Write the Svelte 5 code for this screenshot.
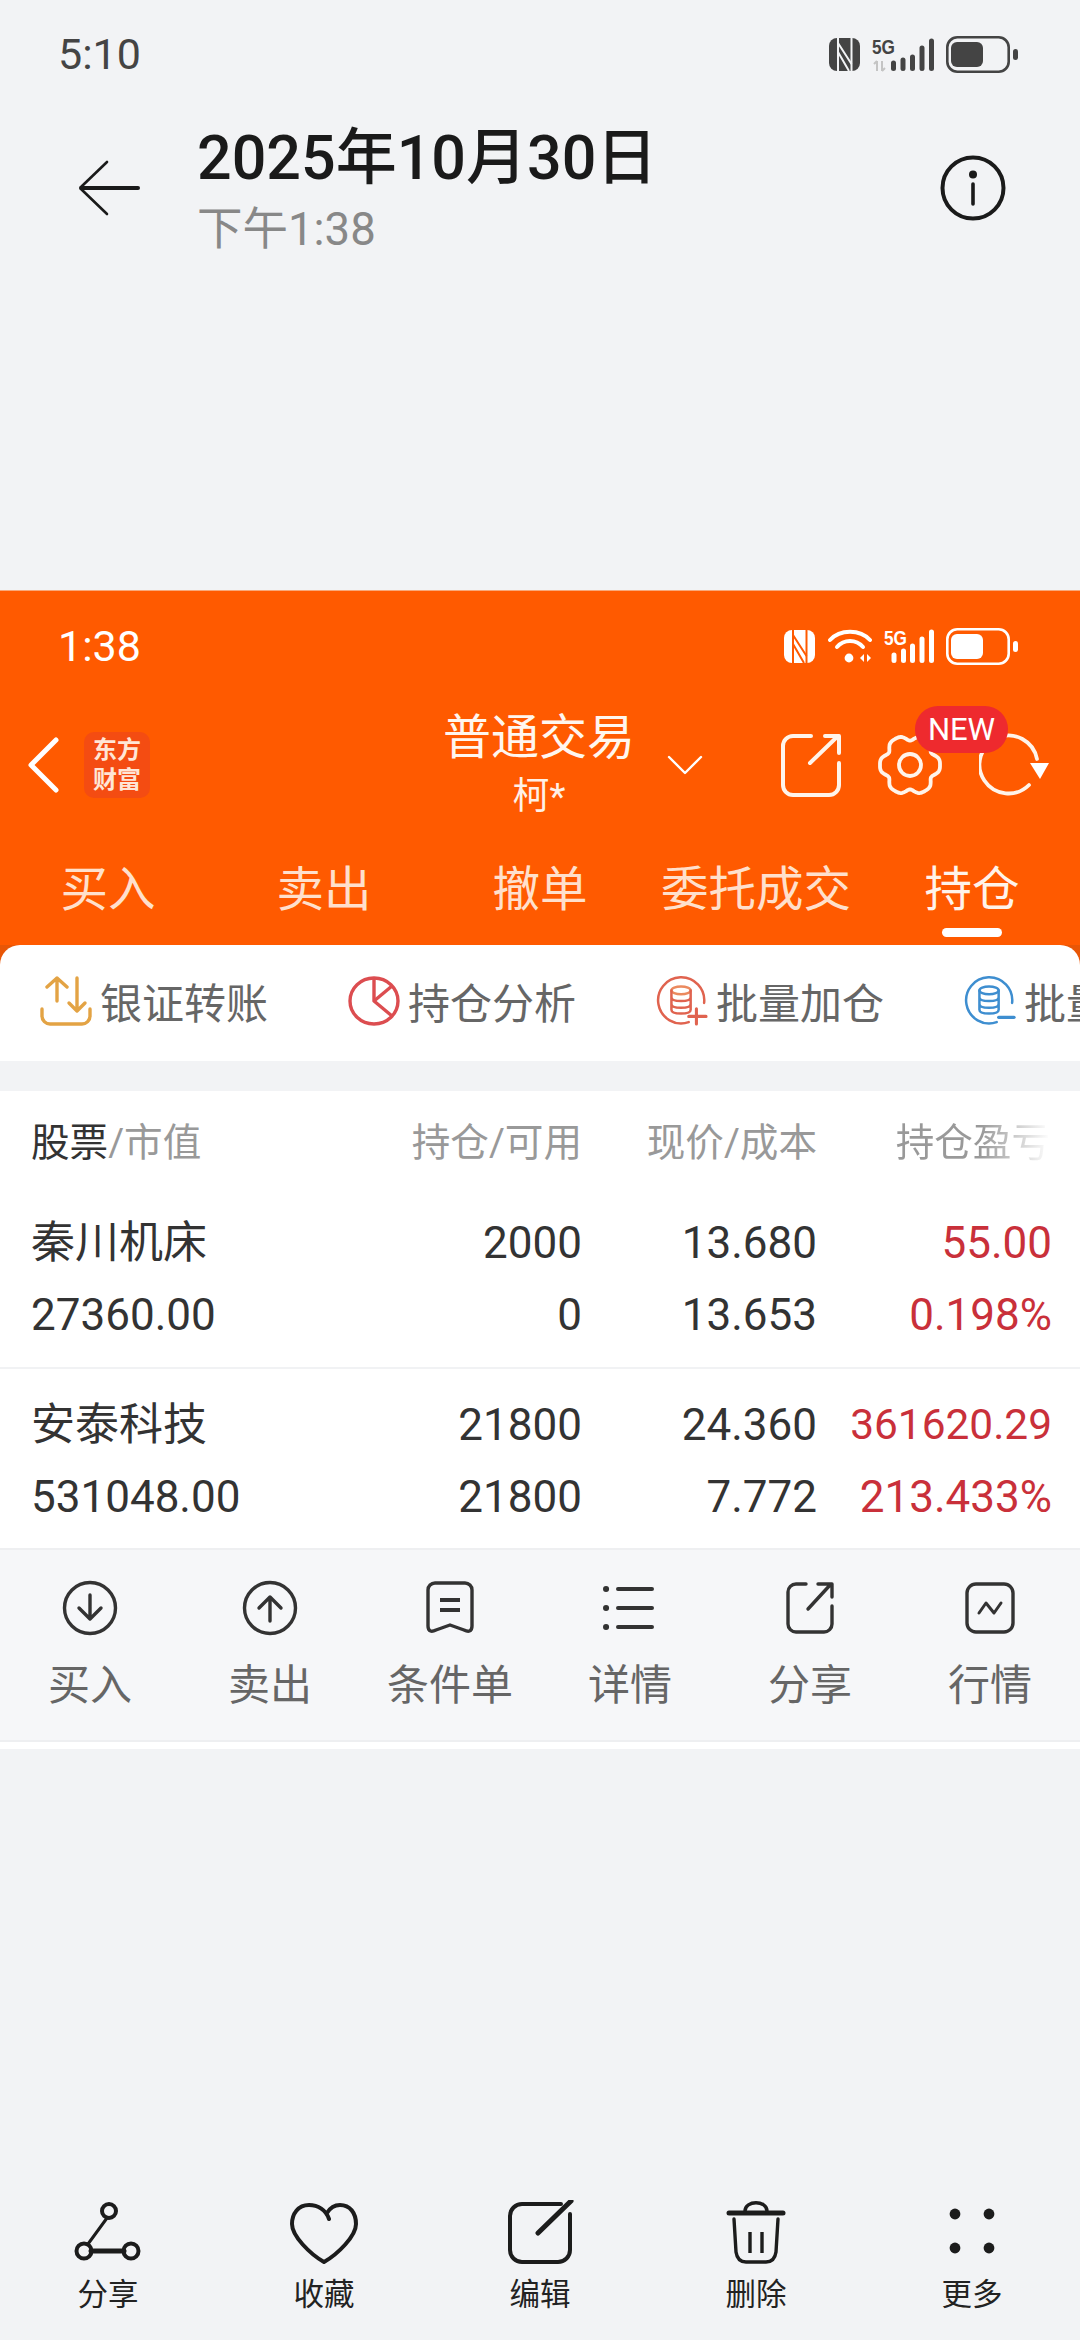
<script>
  const tabs = ['买入', '卖出', '撤单', '委托成交', '持仓'];
  const rows = [
    { name: '秦川机床', value: '27360.00', hold: '2000', avail: '0', price: '13.680', cost: '13.653', pl: '55.00', pct: '0.198%', long: false },
    { name: '安泰科技', value: '531048.00', hold: '21800', avail: '21800', price: '24.360', cost: '7.772', pl: '361620.29', pct: '213.433%', long: true }
  ];
  const actions = ['买入', '卖出', '条件单', '详情', '分享', '行情'];
  const bottom = ['分享', '收藏', '编辑', '删除', '更多'];

  function gearPath() {
    const pts = [];
    for (let i = 0; i < 120; i++) {
      const t = (i / 120) * Math.PI * 2;
      const c = Math.cos(6 * t);
      const r = 28 - 2.8 * c - 0.8 * Math.cos(12 * t);
      pts.push(`${(33 + r * Math.sin(t)).toFixed(1)} ${(32 - r * Math.cos(t)).toFixed(1)}`);
    }
    return 'M' + pts.join('L') + 'Z';
  }
  const gear = gearPath();
</script>

{#snippet nfc(bg)}
  <svg class="nfc" viewBox="0 0 31 33">
    <rect x="0" y="0" width="31" height="33" rx="8" fill="currentColor" />
    <g fill="none" stroke={bg} stroke-width="2">
      <path d="M9 0V33M22.5 0V33" />
      <path d="M9 5L22.5 26M9 14L20 33" />
    </g>
  </svg>
{/snippet}

{#snippet signalDark()}
  <svg class="signal" viewBox="0 0 62 33">
    <text x="0" y="16" class="fiveg" textLength="23" lengthAdjust="spacingAndGlyphs">5G</text>
    <g fill="none" stroke="#c4c4c4" stroke-width="2">
      <path d="M5 23v10M2 26l3-3M10 23v10M13 30l-3 3" />
    </g>
    <g fill="none" stroke="currentColor" stroke-width="5" stroke-linecap="round">
      <path d="M21.5 25v5.5M31 22v8.5M40.5 19v11.5M50 10v20.5M59.5 3v27.5" />
    </g>
  </svg>
{/snippet}

{#snippet signalLight()}
  <svg class="signal light-sig" viewBox="0 0 50 34">
    <text x="0" y="16" class="fiveg" textLength="23" lengthAdjust="spacingAndGlyphs">5G</text>
    <g fill="none" stroke="currentColor" stroke-width="5" stroke-linecap="round">
      <path d="M10 26v5.5M19.5 22v9.5M28.5 17v14.5M38 10v21.5M47.5 3v28.5" />
    </g>
  </svg>
{/snippet}

{#snippet battery()}
  <svg class="battery" viewBox="0 0 72 37">
    <rect x="1.3" y="1.3" width="61.4" height="34.4" rx="10" fill="none" stroke="currentColor" stroke-width="2.6" />
    <rect x="5" y="6" width="32" height="25" rx="6" fill="currentColor" />
    <rect x="67" y="13" width="5" height="11" rx="2.5" fill="currentColor" />
  </svg>
{/snippet}

<div class="page">
  <section class="gallery-head">
    <div class="status dark">
      <span class="time">5:10</span>
      <div class="status-icons">
        {@render nfc('#f2f3f5')}
        {@render signalDark()}
        {@render battery()}
      </div>
    </div>
    <div class="titlebar">
      <svg class="back" viewBox="0 0 62 56" fill="none" stroke="#1a1a1a" stroke-linecap="round">
        <path d="M29 2L3 27" stroke-width="2.6" />
        <path d="M3 29L29 54" stroke-width="2.6" />
        <path d="M3 28H60" stroke-width="4" />
      </svg>
      <div class="title-text">
        <div class="date">2025年10月30日</div>
        <div class="clock">下午1:38</div>
      </div>
      <svg class="info" viewBox="0 0 66 66" fill="none" stroke="#1a1a1a">
        <circle cx="33" cy="33" r="30.5" stroke-width="4" />
        <circle cx="33" cy="19.5" r="4" fill="#1a1a1a" stroke="none" />
        <path d="M33 29v20" stroke-width="3.6" stroke-linecap="round" />
      </svg>
    </div>
  </section>

  <section class="shot">
    <div class="orange">
      <div class="status light">
        <span class="time">1:38</span>
        <div class="status-icons">
          {@render nfc('#ff5a00')}
          <svg class="wifi" viewBox="0 0 44 34" fill="none" stroke="currentColor" stroke-linecap="round">
            <path d="M2 11C12 0 32 0 42 11" stroke-width="4" />
            <path d="M9 18C16 10 28 10 35 18" stroke-width="4" />
            <circle cx="21" cy="29" r="4.4" fill="currentColor" stroke="none" />
            <path d="M36 25l-4 4l4 4ZM39 25l4 4l-4 4Z" fill="currentColor" stroke="none" />
          </svg>
          {@render signalLight()}
          {@render battery()}
        </div>
      </div>

      <div class="apphead">
        <svg class="chev" viewBox="0 0 32 56" fill="none" stroke="#fff" stroke-width="5" stroke-linecap="round" stroke-linejoin="round">
          <path d="M29 3L4 28L29 53" />
        </svg>
        <div class="logo"><span>东方</span><span>财富</span></div>
        <div class="apptitle">
          <div class="t1">普通交易</div>
          <div class="t2">柯*</div>
        </div>
        <svg class="down" viewBox="0 0 36 20" fill="none" stroke="#fff" stroke-width="2.4" stroke-linecap="round" stroke-linejoin="round">
          <path d="M2 2L18 18L34 2" />
        </svg>
        <svg class="hshare" viewBox="0 0 60 64" fill="none" stroke="#fff4ea" stroke-width="4" stroke-linecap="round" stroke-linejoin="round">
          <path d="M30 3H12A10 10 0 0 0 2 13V52A10 10 0 0 0 12 62H48A10 10 0 0 0 58 52V30" />
          <path d="M29 30L57 3" />
          <path d="M44 3H58V20" />
        </svg>
        <div class="gearwrap">
          <svg class="gear" viewBox="0 0 66 64" fill="none" stroke="#fff4ea" stroke-width="3.8">
            <path d={gear} stroke-linejoin="round" />
            <circle cx="33" cy="32" r="11" />
          </svg>
          <span class="new">NEW</span>
        </div>
        <svg class="refresh" viewBox="0 0 70 64" fill="none" stroke="#fff4ea" stroke-width="3.8" stroke-linecap="round">
          <path d="M50 52A29 29 0 1 1 58 26" />
          <path d="M51 30H70L61 46Z" fill="#fff" stroke="none" />
        </svg>
      </div>

      <div class="tabs">
        {#each tabs as t, i}
          <div class="tab" class:active={i === 4}>{t}</div>
        {/each}
      </div>
    </div>

    <div class="cardback">
      <div class="shortcuts">
        <div class="sc">
          <svg viewBox="0 0 52 50" fill="none" stroke="#e3a344" stroke-width="3.4" stroke-linecap="round" stroke-linejoin="round">
            <path d="M2 33V40A8 8 0 0 0 10 48H42A8 8 0 0 0 50 40V33" />
            <path d="M17 25V2M7 11L17 2L27 11" />
            <path d="M37 2V35M29 27L37 35L45 27" />
          </svg>
          <span>银证转账</span>
        </div>
        <div class="sc">
          <svg viewBox="0 0 52 50" fill="none" stroke="#dc4d50" stroke-width="3.4" stroke-linejoin="round">
            <ellipse cx="26" cy="25" rx="24" ry="23" />
            <path d="M26 2V25L44 40" />
            <path d="M26 25L44 10" />
          </svg>
          <span>持仓分析</span>
        </div>
        <div class="sc">
          <svg viewBox="0 0 54 52" fill="none" stroke="#e0634f" stroke-width="2.6" stroke-linecap="round">
            <path d="M50 28A24 24 0 1 0 34 48" />
            <ellipse cx="26" cy="15" rx="10" ry="4" stroke="#eb8a5f" />
            <path d="M16 15V35C16 38 21 39 26 39S36 38 36 35V15M16 22C16 25 21 26 26 26S36 25 36 22M16 29C16 32 21 33 26 33S36 32 36 29" />
            <path d="M42 34V50M34 42H52" stroke-width="3.2" />
          </svg>
          <span>批量加仓</span>
        </div>
        <div class="sc">
          <svg viewBox="0 0 54 52" fill="none" stroke="#3e8ed0" stroke-width="2.6" stroke-linecap="round">
            <path d="M50 28A24 24 0 1 0 34 48" />
            <ellipse cx="26" cy="15" rx="10" ry="4" />
            <path d="M16 15V35C16 38 21 39 26 39S36 38 36 35V15M16 22C16 25 21 26 26 26S36 25 36 22M16 29C16 32 21 33 26 33S36 32 36 29" />
            <path d="M36 43H52" stroke-width="3.4" />
          </svg>
          <span>批量减仓</span>
        </div>
      </div>
    </div>

    <div class="table">
      <div class="row head">
        <div class="c c1"><span class="strong">股票</span>/市值</div>
        <div class="c c2">持仓/可用</div>
        <div class="c c3">现价/成本</div>
        <div class="c c4 h4"><span class="fade">持仓盈亏</span></div>
      </div>
      {#each rows as r}
        <div class="row data">
          <div class="c c1"><div>{r.name}</div><div>{r.value}</div></div>
          <div class="c c2"><div>{r.hold}</div><div>{r.avail}</div></div>
          <div class="c c3"><div>{r.price}</div><div>{r.cost}</div></div>
          <div class="c c4 red"><div class:long={r.long}>{r.pl}</div><div>{r.pct}</div></div>
        </div>
      {/each}
    </div>

    <div class="actions">
      {#each actions as a, i}
        <div class="act">
          <svg viewBox="0 0 56 56" fill="none" stroke="#333" stroke-width="3.4" stroke-linecap="round" stroke-linejoin="round">
            {#if i === 0}
              <circle cx="28" cy="28" r="25.5" />
              <path d="M28 15V39M17 28L28 39L39 28" />
            {:else if i === 1}
              <circle cx="28" cy="28" r="25.5" />
              <path d="M28 41V17M17 28L28 17L39 28" />
            {:else if i === 2}
              <path d="M6 10A7 7 0 0 1 13 3H43A7 7 0 0 1 50 10V46C50 52 46 52 42 50L28 45L14 50C10 52 6 52 6 46Z" />
              <path d="M18 20H38M18 30H38" stroke-width="4" stroke-linecap="butt" />
            {:else if i === 3}
              <path d="M16 9H50M16 28H50M16 47H50" stroke-width="4" />
              <path d="M4 9h.1M4 28h.1M4 47h.1" stroke-width="6" />
            {:else if i === 4}
              <path d="M24 4H14A8 8 0 0 0 6 12V44A8 8 0 0 0 14 52H42A8 8 0 0 0 50 44V26" />
              <path d="M26 29L49 4M36 4H50V17" />
            {:else}
              <rect x="5" y="4" width="46" height="48" rx="9" />
              <path d="M17 33L24 23L32 33L39 23" stroke-width="3" />
            {/if}
          </svg>
          <span>{a}</span>
        </div>
      {/each}
    </div>
    <div class="whiteline"></div>
  </section>

  <nav class="bottom">
    {#each bottom as b, i}
      <div class="bt">
        <svg viewBox="0 0 68 64" fill="none" stroke="#1c1c1c" stroke-width="4" stroke-linecap="round" stroke-linejoin="round">
          {#if i === 0}
            <circle cx="35" cy="11" r="7" />
            <circle cx="10" cy="51" r="7.5" />
            <circle cx="57" cy="51" r="7.5" />
            <path d="M33 18L14 44" stroke-width="3" />
            <path d="M17 51H50" stroke-width="5" />
          {:else if i === 1}
            <path d="M39 19C36 10 28 5 19 5C8 5 2 14 2 24C2 36 20 54 34 62C48 54 66 36 66 24C66 13 60 5 50 5C44 5 40 8 37 13" />
          {:else if i === 2}
            <path d="M55 4H16A12 12 0 0 0 4 16V50A12 12 0 0 0 16 62H52A12 12 0 0 0 64 50V14" />
            <path d="M65 1L32 33" stroke-width="5" />
          {:else if i === 3}
            <path d="M7 13H61" stroke-width="5" />
            <path d="M23 12V11C23 0 45 0 45 11V12" stroke-width="3.4" />
            <path d="M12 19L14 52C15 59 18 62 24 62H44C50 62 53 59 54 52L56 19" stroke-width="3.4" />
            <path d="M28 32V53M40 32V53" stroke-width="3.4" stroke-linecap="butt" />
          {:else}
            <g fill="#1c1c1c" stroke="none">
              <circle cx="17" cy="14" r="5.4" />
              <circle cx="51" cy="14" r="5.4" />
              <circle cx="17" cy="48" r="5.4" />
              <circle cx="51" cy="48" r="5.4" />
            </g>
          {/if}
        </svg>
        <span>{b}</span>
      </div>
    {/each}
  </nav>
</div>

<style>
  :global(body) {
    margin: 0;
    background: #f2f3f5;
  }
  .page {
    width: 1080px;
    height: 2340px;
    display: flex;
    flex-direction: column;
    overflow: hidden;
    background: #f2f3f5;
    font-family: Roboto, "Noto Sans CJK SC", sans-serif;
    color: #333;
  }
  .gallery-head {
    height: 590px;
    flex: none;
  }
  .status {
    height: 108px;
    display: flex;
    align-items: center;
    justify-content: space-between;
    padding: 0 62px 0 58px;
  }
  .status.dark { color: #444; }
  .status.light { color: #fff; height: 110px; }
  .time {
    font-size: 43px;
    font-weight: 400;
  }
  .status-icons {
    display: flex;
    align-items: center;
    gap: 12px;
  }
  .nfc { width: 31px; height: 33px; }
  .wifi { width: 44px; height: 34px; margin-left: 1px; }
  .signal { width: 62px; height: 33px; overflow: visible; }
  .signal.light-sig { width: 50px; height: 34px; }
  .fiveg {
    font-size: 21px;
    font-weight: 700;
    fill: currentColor;
    font-family: "Liberation Sans", sans-serif;
  }
  .battery { width: 72px; height: 37px; }
  .titlebar {
    display: flex;
    align-items: center;
    height: 160px;
    padding: 0 76px 0 78px;
  }
  .back { width: 62px; height: 56px; flex: none; }
  .title-text {
    flex: 1;
    margin-left: 57px;
    padding-top: 3px;
  }
  .date {
    font-size: 61px;
    line-height: 70px;
    font-weight: 500;
    color: #1a1a1a;
  }
  .clock {
    font-size: 45.5px;
    line-height: 54px;
    margin-top: 10px;
    color: #888;
  }
  .info { width: 66px; height: 66px; flex: none; margin-right: -2px; }

  .shot {
    flex: none;
    height: 1159px;
  }
  .orange {
    height: 355px;
    background: #ff5a00;
    border-top: 1px solid #f9a87a;
    color: #fff;
  }
  .apphead {
    box-sizing: border-box;
    display: flex;
    align-items: center;
    height: 124px;
    padding-top: 4px;
    padding-left: 27px;
  }
  .chev { width: 32px; height: 56px; flex: none; }
  .logo {
    width: 66px;
    height: 66px;
    margin-left: 25px;
    border-radius: 10px;
    background: #f44c12;
    display: flex;
    flex-direction: column;
    align-items: center;
    justify-content: center;
    font-size: 24px;
    line-height: 30px;
    font-weight: 700;
    color: #ffe6d6;
    flex: none;
  }
  .apptitle {
    width: 192px;
    margin-left: 293px;
    text-align: center;
    flex: none;
  }
  .t1 { font-size: 48px; line-height: 58px; color: #fff6ef; }
  .t2 { font-size: 37px; line-height: 48px; margin-top: 6px; color: #fff0e6; }
  .down { width: 36px; height: 20px; margin-left: 32px; flex: none; }
  .hshare { width: 60px; height: 64px; margin-left: 78px; flex: none; }
  .gearwrap {
    position: relative;
    width: 66px;
    height: 64px;
    margin-left: 36px;
    flex: none;
  }
  .gear { width: 66px; height: 64px; display: block; }
  .new {
    position: absolute;
    left: 38px;
    top: -27px;
    width: 93px;
    height: 47px;
    border-radius: 23px;
    background: #ee2a2e;
    color: #fff;
    font-size: 31px;
    line-height: 47px;
    text-align: center;
    z-index: 1;
  }
  .refresh { width: 70px; height: 64px; margin-left: 36px; flex: none; }
  .tabs {
    display: grid;
    grid-template-columns: repeat(5, 216px);
    height: 121px;
  }
  .tab {
    position: relative;
    text-align: center;
    font-size: 47.5px;
    line-height: 66px;
    padding-top: 32px;
    color: #ffe0cc;
  }
  .tab.active { color: #fff3ea; }
  .tab.active::after {
    content: "";
    position: absolute;
    left: 78px;
    top: 103px;
    width: 60px;
    height: 9px;
    border-radius: 5px;
    background: #fff;
  }

  .cardback {
    background: #e85606;
    margin-top: -1px;
    height: 116px;
  }
  .shortcuts {
    background: #fff;
    height: 116px;
    border-radius: 20px 20px 0 0;
    display: flex;
    gap: 80px;
    padding-left: 40px;
    overflow: hidden;
  }
  .sc {
    display: flex;
    align-items: center;
    gap: 8px;
    flex: none;
    height: 111px;
    font-size: 42px;
    color: #666;
  }
  .sc svg { width: 52px; height: 50px; flex: none; }

  .table {
    margin-top: 30px;
    background: #fff;
    height: 457px;
  }
  .row {
    display: flex;
    box-sizing: border-box;
  }
  .row.head {
    height: 95px;
    align-items: center;
    font-size: 38.6px;
    color: #999;
  }
  .row.data {
    height: 181px;
    padding-top: 4px;
    align-items: center;
    font-size: 44px;
    line-height: 72px;
    color: #333;
  }
  .row.data + .row.data { border-top: 2px solid #f1f2f4; }
  .strong { color: #333; }
  .c { box-sizing: border-box; text-align: right; flex: none; }
  .c1 { width: 342px; padding-left: 31px; text-align: left; }
  .c2 { width: 240px; }
  .c3 { width: 235px; }
  .c4 { width: 235px; }
  .h4 { width: 233px; }
  .red { color: #c9303a; }
  .long { font-size: 42.4px; }
  .fade {
    background: linear-gradient(90deg, #999 55%, #fff 100%);
    -webkit-background-clip: text;
    background-clip: text;
    color: transparent;
  }

  .actions {
    display: grid;
    grid-template-columns: repeat(6, 180px);
    background: #f6f7f9;
    border-top: 2px solid #eeeff1;
    border-bottom: 2px solid #eeeff1;
    box-sizing: border-box;
    height: 194px;
  }
  .act {
    display: flex;
    flex-direction: column;
    align-items: center;
    padding-top: 30px;
    font-size: 42px;
    color: #666;
  }
  .act svg { width: 56px; height: 56px; }
  .act span { line-height: 56px; margin-top: 22px; }
  .whiteline { height: 7px; background: #fff; }

  .bottom {
    margin-top: auto;
    display: grid;
    grid-template-columns: repeat(5, 216px);
    height: 140px;
  }
  .bt {
    display: flex;
    flex-direction: column;
    align-items: center;
    font-size: 30.5px;
    color: #222;
  }
  .bt svg { width: 68px; height: 64px; }
  .bt span { line-height: 40px; margin-top: 11px; }
</style>
